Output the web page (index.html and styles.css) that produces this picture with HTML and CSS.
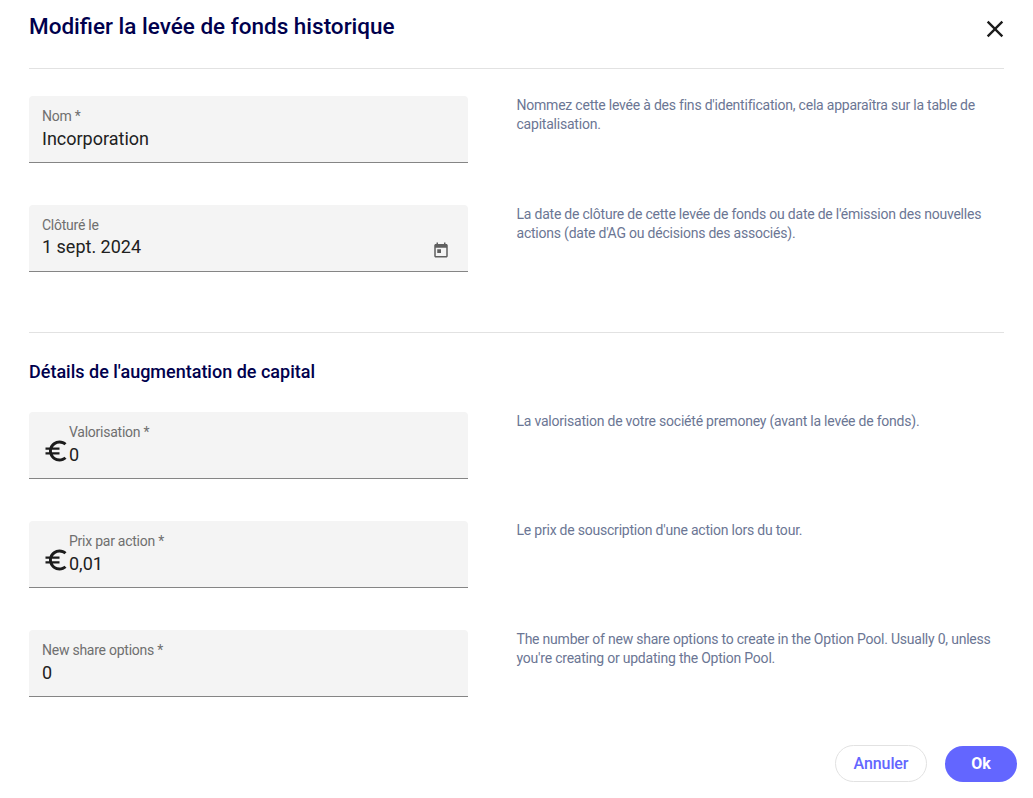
FILE: index.html
```html
<!DOCTYPE html>
<html lang="fr">
<head>
<meta charset="utf-8">
<title>Modifier la levée de fonds historique</title>
<link rel="stylesheet" href="styles.css">
</head>
<body>
<div class="dialog">
  <header class="head">
    <h1 class="title">Modifier la levée de fonds historique</h1>
    <button class="close" aria-label="Fermer">
      <svg viewBox="0 0 24 24" width="28" height="28"><path d="M19 6.41 17.59 5 12 10.59 6.41 5 5 6.41 10.59 12 5 17.59 6.41 19 12 13.41 17.59 19 19 17.59 13.41 12z"/></svg>
    </button>
  </header>
  <hr class="rule">
  <section class="group first">
    <div class="row">
      <div class="field">
        <div class="box"><span class="label">Nom *</span><span class="value">Incorporation</span></div>
      </div>
      <p class="hint">Nommez cette levée à des fins d'identification, cela apparaîtra sur la table de capitalisation.</p>
    </div>
    <div class="row">
      <div class="field">
        <div class="box"><span class="label">Clôturé le</span><span class="value date">1 sept. 2024</span></div>
        <svg class="cal" viewBox="0 0 24 24" width="18" height="18"><path d="M19 4h-1V2h-2v2H8V2H6v2H5c-1.11 0-2 .9-2 2v14c0 1.1.89 2 2 2h14c1.1 0 2-.9 2-2V6c0-1.1-.9-2-2-2zm0 16H5V9h14v11zM7 11h5v5H7z"/></svg>
      </div>
      <p class="hint">La date de clôture de cette levée de fonds ou date de l'émission des nouvelles actions (date d'AG ou décisions des associés).</p>
    </div>
  </section>
  <hr class="rule">
  <h2 class="subtitle">Détails de l'augmentation de capital</h2>
  <section class="group">
    <div class="row">
      <div class="field prefixed">
        <svg class="euro" viewBox="0 0 24 24" width="28" height="28"><path d="M15 18.5c-2.51 0-4.68-1.42-5.76-3.5H15v-2H8.58c-.05-.33-.08-.66-.08-1s.03-.67.08-1H15V9H9.24C10.32 6.92 12.5 5.5 15 5.5c1.61 0 3.09.59 4.23 1.57L21 5.3C19.41 3.87 17.3 3 15 3c-3.92 0-7.24 2.51-8.48 6H3v2h3.06c-.04.33-.06.66-.06 1s.02.67.06 1H3v2h3.52c1.24 3.49 4.56 6 8.48 6 2.31 0 4.41-.87 6-2.3l-1.78-1.77c-1.13.98-2.6 1.57-4.22 1.57z"/></svg>
        <div class="box"><span class="label">Valorisation *</span><span class="value">0</span></div>
      </div>
      <p class="hint">La valorisation de votre société premoney (avant la levée de fonds).</p>
    </div>
    <div class="row">
      <div class="field prefixed">
        <svg class="euro" viewBox="0 0 24 24" width="28" height="28"><path d="M15 18.5c-2.51 0-4.68-1.42-5.76-3.5H15v-2H8.58c-.05-.33-.08-.66-.08-1s.03-.67.08-1H15V9H9.24C10.32 6.92 12.5 5.5 15 5.5c1.61 0 3.09.59 4.23 1.57L21 5.3C19.41 3.87 17.3 3 15 3c-3.92 0-7.24 2.51-8.48 6H3v2h3.06c-.04.33-.06.66-.06 1s.02.67.06 1H3v2h3.52c1.24 3.49 4.56 6 8.48 6 2.31 0 4.41-.87 6-2.3l-1.78-1.77c-1.13.98-2.6 1.57-4.22 1.57z"/></svg>
        <div class="box"><span class="label">Prix par action *</span><span class="value">0,01</span></div>
      </div>
      <p class="hint">Le prix de souscription d'une action lors du tour.</p>
    </div>
    <div class="row">
      <div class="field">
        <div class="box"><span class="label">New share options *</span><span class="value">0</span></div>
      </div>
      <p class="hint">The number of new share options to create in the Option Pool. Usually 0, unless you're creating or updating the Option Pool.</p>
    </div>
  </section>
  <footer class="actions">
    <button class="btn ghost">Annuler</button>
    <button class="btn primary">Ok</button>
  </footer>
</div>
</body>
</html>
```
FILE: styles.css
```css
* { box-sizing: border-box; }
html, body { margin: 0; padding: 0; background: #fff; }
body { font-family: Roboto, sans-serif; overflow: hidden; }
.dialog { width: 1033px; height: 798px; padding: 0 16px 0 29px; }
.head { display: flex; align-items: center; justify-content: space-between; height: 68px; width: 976px; padding-bottom: 16px; }
.title { margin: 0; font-size: 22.5px; line-height: 28px; font-weight: 500; color: #00004d; }
.close { padding: 0; border: 0; background: none; width: 28px; height: 28px; margin: 6px -4px 0 0; display: block; }
.close svg { display: block; fill: #1c1c1c; }
.rule { margin: 0; width: 975px; height: 1px; border: 0; background: #e2e2e2; }
.group { display: flex; flex-direction: column; gap: 42px; }
.group.first { padding: 27px 0 60px; }
.subtitle { margin: 0; padding-top: 28px; height: 79px; font-size: 18px; line-height: 22px; font-weight: 500; color: #00004d; }
.row { display: grid; grid-template-columns: 439px 487px; column-gap: 48.5px; width: 975px; }
.field { position: relative; height: 67px; background: #f4f4f4; border-radius: 4px 4px 0 0; border-bottom: 1px solid #858585; }
.box { display: flex; flex-direction: column; padding: 12px 13px 0; }
.prefixed .box { padding-left: 40px; }
.label { font-size: 14px; line-height: 16px; letter-spacing: -0.25px; color: #6f6f6f; }
.value { font-size: 18px; line-height: 30px; color: #212121; }
.value.date { line-height: 28px; }
.hint { margin: 0; font-size: 14px; line-height: 19px; letter-spacing: -0.22px; color: #6b7694; }
.cal { position: absolute; right: 18px; top: 36px; fill: #5f5f5f; }
.euro { position: absolute; left: 13px; top: 25px; fill: #1c1c1c; }
.actions { display: flex; justify-content: flex-end; align-items: center; gap: 18px; margin-top: 48px; width: 988px; }
.btn { font-family: Roboto, sans-serif; font-size: 16px; font-weight: 500; border-radius: 19px; padding: 0; }
.ghost { width: 92px; height: 37px; background: #fff; border: 1px solid #e2e2e2; color: #6366ff; letter-spacing: -0.1px; }
.primary { width: 72px; height: 36px; background: #6366ff; border: 0; color: #fff; font-weight: 700; }
```
